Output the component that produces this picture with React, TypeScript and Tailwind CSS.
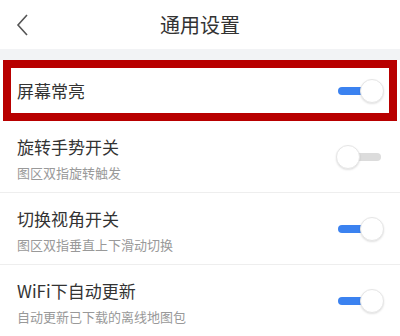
import React from 'react';

interface Setting {
  title: string;
  desc?: string;
  on: boolean;
}

const settings: Setting[] = [
  { title: '旋转手势开关', desc: '图区双指旋转触发', on: false },
  { title: '切换视角开关', desc: '图区双指垂直上下滑动切换', on: true },
  { title: 'WiFi下自动更新', desc: '自动更新已下载的离线地图包', on: true },
];

function Toggle({ on }: { on: boolean }) {
  return (
    <div className="relative w-[48px] h-[24px] shrink-0">
      <div
        className={
          on
            ? 'absolute left-[2px] top-[8px] w-[26px] h-[8px] rounded-full bg-[#3b82f0]'
            : 'absolute left-[18px] top-[8px] w-[27px] h-[8px] rounded-full bg-[#dcdcdc]'
        }
      />
      <div
        className={
          on
            ? 'absolute left-[24px] top-0 w-[24px] h-[24px] rounded-full bg-white border border-[#e6e6e6] shadow-[0_1px_2px_rgba(0,0,0,0.12)]'
            : 'absolute left-0 top-0 w-[24px] h-[24px] rounded-full bg-white border border-[#e6e6e6] shadow-[0_1px_2px_rgba(0,0,0,0.12)]'
        }
      />
    </div>
  );
}

export default function App() {
  return (
    <div
      className="w-[400px] h-[336px] overflow-hidden bg-white text-[#333]"
      style={{ fontFamily: '"Noto Sans CJK SC", "Noto Sans", sans-serif' }}
    >
      {/* Header */}
      <div className="relative h-[49px] flex items-center justify-center">
        <svg className="absolute left-[16px] top-[14px]" width="14" height="22" viewBox="0 0 14 22">
          <path d="M11 1 L2 11 L11 21" fill="none" stroke="#555" strokeWidth="1.6" />
        </svg>
        <span className="text-[20px] leading-none text-[#333]">通用设置</span>
      </div>
      <div className="h-[11px] bg-[#f2f3f5]" />

      {/* Highlighted row */}
      <div className="mx-[3px] h-[61px] border-[8px] border-[#b80000] flex items-center justify-between pl-[6px] pr-[5px]">
        <span className="text-[17px] leading-none">屏幕常亮</span>
        <Toggle on={true} />
      </div>

      {settings.map((s, i) => (
        <div
          key={s.title}
          className={
            i < settings.length - 1
              ? 'h-[72px] flex items-center justify-between pl-[17px] pr-[16px] border-b border-[#eeeeee]'
              : 'h-[72px] flex items-center justify-between pl-[17px] pr-[16px]'
          }
        >
          <div className="self-start pt-[15px] flex flex-col">
            <span className="text-[17px] leading-[22px]">{s.title}</span>
            <span className="mt-[6px] text-[13px] leading-[18px] text-[#999]">{s.desc}</span>
          </div>
          <Toggle on={s.on} />
        </div>
      ))}
    </div>
  );
}
